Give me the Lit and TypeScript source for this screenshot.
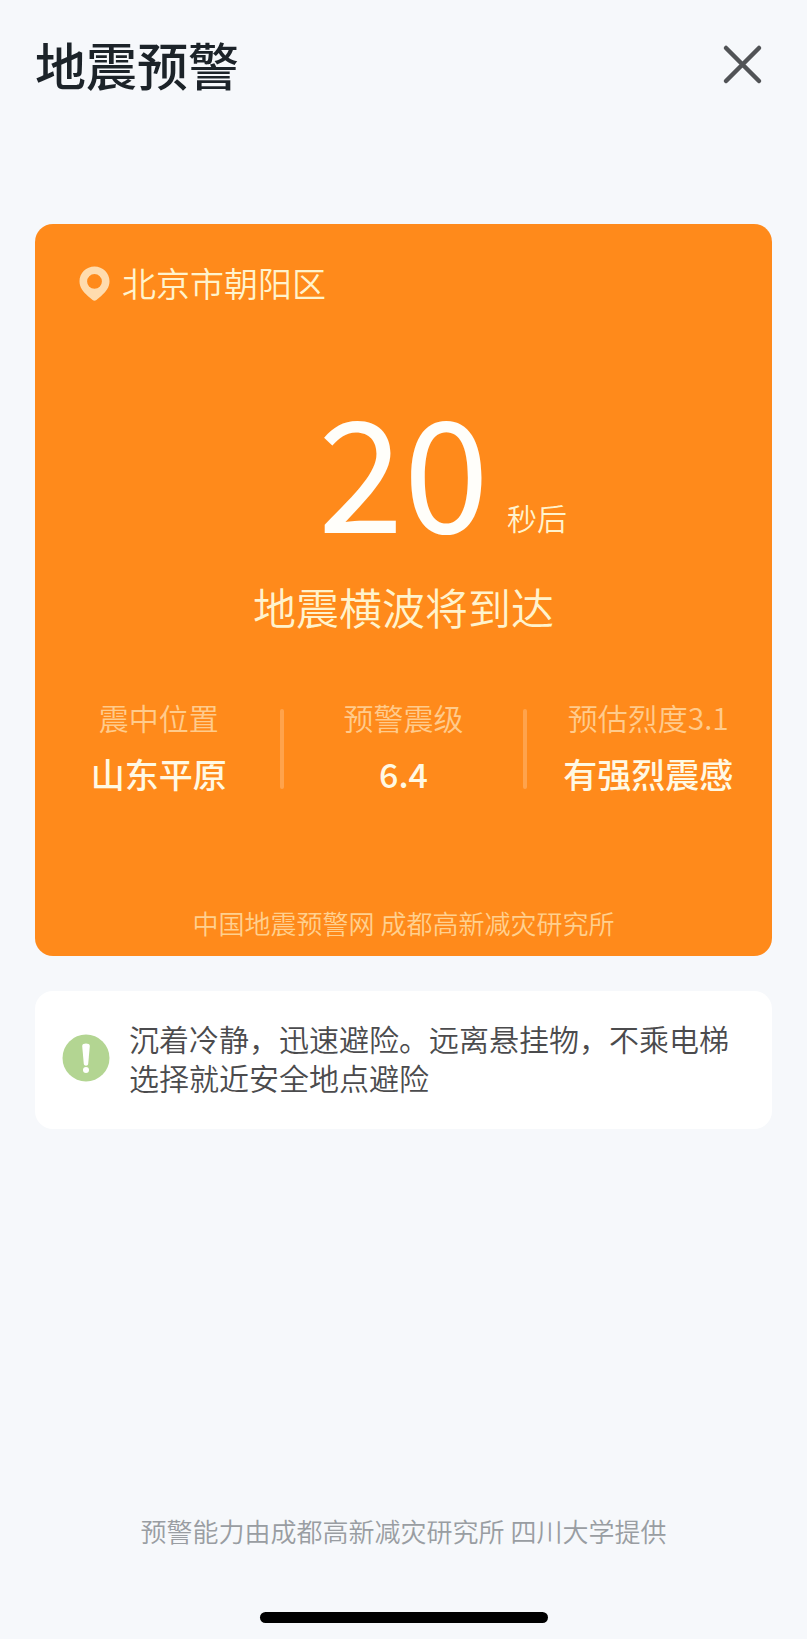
import { LitElement, html, css } from "lit";
import { customElement, property } from "lit/decorators.js";

interface Fact {
  label: string;
  value: string;
}

@customElement("quake-facts")
export class QuakeFacts extends LitElement {
  @property({ attribute: false }) facts: Fact[] = [];

  static styles = css`
    :host {
      display: block;
    }
    .facts {
      display: grid;
      grid-template-columns: 50fr 49fr 50fr;
      margin: 0;
    }
    .fact {
      display: flex;
      flex-direction: column;
      align-items: center;
      position: relative;
      white-space: nowrap;
    }
    .fact + .fact::before {
      content: "";
      position: absolute;
      left: -2px;
      top: 14px;
      bottom: 10px;
      width: 4px;
      border-radius: 2px;
      background: #ffa34c;
    }
    .label {
      font-size: 30px;
      line-height: 44px;
      font-weight: 350;
      color: #ffcb8c;
    }
    .value {
      margin: 10px 0 0;
      font-size: 34px;
      line-height: 50px;
      font-weight: 500;
      color: #fff9e4;
    }
  `;

  render() {
    return html`
      <dl class="facts">
        ${this.facts.map(
          (fact) => html`
            <div class="fact">
              <dt class="label">${fact.label}</dt>
              <dd class="value">${fact.value}</dd>
            </div>
          `
        )}
      </dl>
    `;
  }
}

@customElement("app-root")
export class AppRoot extends LitElement {
  private facts: Fact[] = [
    { label: "震中位置", value: "山东平原" },
    { label: "预警震级", value: "6.4" },
    { label: "预估烈度3.1", value: "有强烈震感" },
  ];

  static styles = css`
    :host {
      display: flex;
      flex-direction: column;
      box-sizing: border-box;
      min-height: 100vh;
      padding: 0 35px 16px;
      background: #f6f8fb;
      font-family: "Noto Sans CJK SC", "Noto Sans", sans-serif;
      font-weight: 350;
    }
    .header {
      display: flex;
      align-items: center;
      justify-content: space-between;
      padding-top: 26px;
    }
    .title {
      margin: 0;
      font-size: 51px;
      line-height: 76px;
      font-weight: 500;
      color: #1c2329;
    }
    .close {
      display: flex;
      padding: 8px;
      border: 0;
      background: none;
      cursor: pointer;
    }
    .alert {
      margin-top: 122px;
      padding-top: 34px;
      border-radius: 18px;
      background: #ff8a1b;
      text-align: center;
    }
    .place {
      display: flex;
      align-items: center;
      gap: 12px;
      padding-left: 44px;
      font-size: 34px;
      line-height: 50px;
      color: #fff3cd;
    }
    .countdown {
      display: grid;
      grid-template-columns: 1fr auto 1fr;
      align-items: start;
      margin: 68px 0 18px;
    }
    .seconds {
      grid-column: 2;
      font-size: 154px;
      line-height: 180px;
      font-weight: 400;
      color: #fffefa;
    }
    .unit {
      padding: 119px 0 0 18px;
      text-align: left;
      font-size: 30px;
      line-height: 44px;
      color: #fff3cd;
    }
    .message {
      margin: 0 0 57px;
      font-size: 43px;
      line-height: 64px;
      color: #fff3cd;
    }
    .source {
      margin: 105px 0 0;
      padding-bottom: 14px;
      font-size: 26px;
      line-height: 38px;
      color: #ffd08f;
    }
    .advice {
      display: flex;
      align-items: center;
      gap: 19px;
      margin-top: 35px;
      padding: 28px 27px 32px;
      border-radius: 18px;
      background: #ffffff;
    }
    .advice-text {
      margin: 0;
      font-size: 30px;
      line-height: 39px;
      color: #4b4b4d;
    }
    .icon {
      display: block;
      flex: none;
    }
    .footer {
      display: flex;
      flex-direction: column;
      align-items: center;
      margin-top: auto;
    }
    .provider {
      margin: 0 0 62px;
      font-size: 26px;
      line-height: 38px;
      color: #999da2;
    }
    .home-bar {
      width: 288px;
      height: 11px;
      border-radius: 6px;
      background: #000000;
    }
  `;

  render() {
    return html`
      <header class="header">
        <h1 class="title">地震预警</h1>
        <button class="close" type="button" aria-label="关闭">
          <svg class="icon" width="42" height="42" viewBox="0 0 42 42" aria-hidden="true">
            <path d="M4 5 37 38M37 5 4 38" fill="none" stroke="#515356" stroke-width="4.5" stroke-linecap="round" />
          </svg>
        </button>
      </header>

      <section class="alert">
        <div class="place">
          <svg class="icon" width="31" height="35" viewBox="0 0 31 35" aria-hidden="true">
            <path
              d="M15.5 0.5C7.2 0.5 0.5 7 0.5 15.3C0.5 21.5 4 25.6 8.8 30L13.6 34C14.8 34.9 16.2 34.9 17.4 34L22.2 30C27 25.6 30.5 21.5 30.5 15.3C30.5 7 23.8 0.5 15.5 0.5ZM15.5 8A7.4 7.4 0 1 1 15.5 22.8A7.4 7.4 0 1 1 15.5 8Z"
              fill="#ffdcae"
              fill-rule="evenodd"
            />
          </svg>
          <span>北京市朝阳区</span>
        </div>
        <p class="countdown">
          <span class="seconds">20</span>
          <span class="unit">秒后</span>
        </p>
        <p class="message">地震横波将到达</p>
        <quake-facts .facts=${this.facts}></quake-facts>
        <p class="source">中国地震预警网 成都高新减灾研究所</p>
      </section>

      <section class="advice">
        <svg class="icon" width="48" height="48" viewBox="0 0 48 48" aria-hidden="true">
          <circle cx="24" cy="24" r="23.5" fill="#b3d592" />
          <path d="M20.2 12C20.2 8.8 27.8 8.8 27.8 12L26.2 30C26 32.2 22 32.2 21.8 30Z" fill="#fff" />
          <circle cx="24" cy="36" r="3" fill="#fff" />
        </svg>
        <p class="advice-text">沉着冷静，迅速避险。远离悬挂物，不乘电梯<br />选择就近安全地点避险</p>
      </section>

      <footer class="footer">
        <p class="provider">预警能力由成都高新减灾研究所 四川大学提供</p>
        <div class="home-bar"></div>
      </footer>
    `;
  }
}
